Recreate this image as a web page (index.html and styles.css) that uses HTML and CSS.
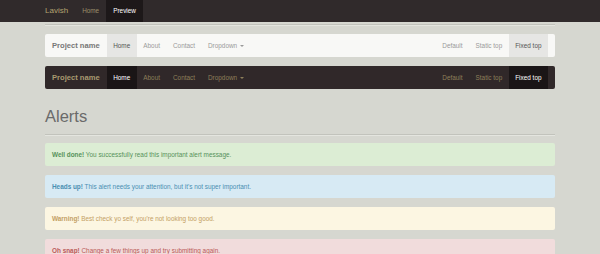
FILE: index.html
```html
<!DOCTYPE html>
<html lang="en">
<head>
  <meta charset="UTF-8">
  <title>Lavish - Preview</title>
  <link rel="stylesheet" href="styles.css">
</head>
<body>
  <div class="topbar">
    <div class="container topbar-inner">
      <a class="top-brand" href="#">Lavish</a>
      <a class="top-link" href="#">Home</a>
      <a class="top-link active" href="#">Preview</a>
    </div>
  </div>

  <div class="container">
    <div class="section-end"></div>

    <div class="navbar navbar-light">
      <a class="brand" href="#">Project name</a>
      <a class="nav-link active" href="#">Home</a>
      <a class="nav-link" href="#">About</a>
      <a class="nav-link" href="#">Contact</a>
      <a class="nav-link" href="#">Dropdown <span class="caret"></span></a>
      <span class="spacer"></span>
      <a class="nav-link" href="#">Default</a>
      <a class="nav-link" href="#">Static top</a>
      <a class="nav-link active" href="#">Fixed top</a>
    </div>

    <div class="navbar navbar-dark">
      <a class="brand" href="#">Project name</a>
      <a class="nav-link active" href="#">Home</a>
      <a class="nav-link" href="#">About</a>
      <a class="nav-link" href="#">Contact</a>
      <a class="nav-link" href="#">Dropdown <span class="caret"></span></a>
      <span class="spacer"></span>
      <a class="nav-link" href="#">Default</a>
      <a class="nav-link" href="#">Static top</a>
      <a class="nav-link active" href="#">Fixed top</a>
    </div>

    <h2 class="page-title">Alerts</h2>

    <div class="alert alert-success"><strong>Well done!</strong> You successfully read this important alert message.</div>
    <div class="alert alert-info"><strong>Heads up!</strong> This alert needs your attention, but it's not super important.</div>
    <div class="alert alert-warning"><strong>Warning!</strong> Best check yo self, you're not looking too good.</div>
    <div class="alert alert-danger"><strong>Oh snap!</strong> Change a few things up and try submitting again.</div>
  </div>
</body>
</html>
```

FILE: styles.css
```css
body {
  margin: 0;
  background-color: #d6d7d0;
  font-family: "Liberation Sans", Arial, sans-serif;
  font-size: 6.4px;
  color: #666666;
}
a {
  text-decoration: none;
}
.container {
  width: 510px;
  margin: 0 auto;
}
.topbar {
  height: 22px;
  background-color: #302a2b;
}
.topbar-inner {
  display: flex;
  height: 22px;
  align-items: stretch;
}
.top-brand {
  color: #b4a270;
  font-size: 8px;
  line-height: 22px;
  padding-right: 7px;
}
.top-link {
  color: #9c8f6a;
  line-height: 22px;
  padding: 0 7px;
}
.top-link.active {
  background-color: #1d1819;
  color: #ffffff;
}
.section-end {
  margin-top: 2px;
  border-top: 1px solid #c2c3bc;
  border-bottom: 1px solid #e4e5df;
}
.navbar {
  display: flex;
  height: 23px;
  padding-right: 7px;
  border-radius: 2px;
  overflow: hidden;
}
.navbar-light {
  margin-top: 8px;
  background-color: #f8f8f6;
}
.navbar-dark {
  margin-top: 9px;
  background-color: #302829;
}
.brand {
  font-size: 7.6px;
  font-weight: bold;
  line-height: 23px;
  padding: 0 7px;
}
.nav-link {
  line-height: 23px;
  padding: 0 6.5px;
}
.spacer {
  flex: 1;
}
.caret {
  display: inline-block;
  width: 0;
  height: 0;
  margin-left: 1px;
  vertical-align: middle;
  border-top: 2px solid currentColor;
  border-left: 2px solid transparent;
  border-right: 2px solid transparent;
}
.navbar-light .brand {
  color: #777777;
}
.navbar-light .nav-link {
  color: #9a9a9a;
}
.navbar-light .nav-link.active {
  background-color: #e6e6e4;
  color: #555555;
}
.navbar-dark .brand {
  color: #a89a70;
}
.navbar-dark .nav-link {
  color: #8d7f5a;
}
.navbar-dark .nav-link.active {
  background-color: #1a1516;
  color: #ffffff;
}
.page-title {
  margin: 17px 0 0;
  padding-bottom: 8px;
  font-size: 16.5px;
  font-weight: normal;
  line-height: 20px;
  color: #6a6a6a;
  border-bottom: 1px solid #c2c3bc;
  box-shadow: 0 1px 0 #e4e5df;
}
.alert {
  height: 23px;
  line-height: 23px;
  padding: 0 7px;
  margin-top: 9px;
  border-radius: 2px;
  font-size: 6.4px;
}
.page-title + .alert {
  margin-top: 8px;
}
.alert-success {
  background-color: #dcedd4;
  color: #56925a;
}
.alert-info {
  background-color: #d7eaf4;
  color: #4a8fb2;
}
.alert-warning {
  background-color: #fcf6e2;
  color: #c3a064;
}
.alert-danger {
  background-color: #f1dcdc;
  color: #bb5a58;
}
```
